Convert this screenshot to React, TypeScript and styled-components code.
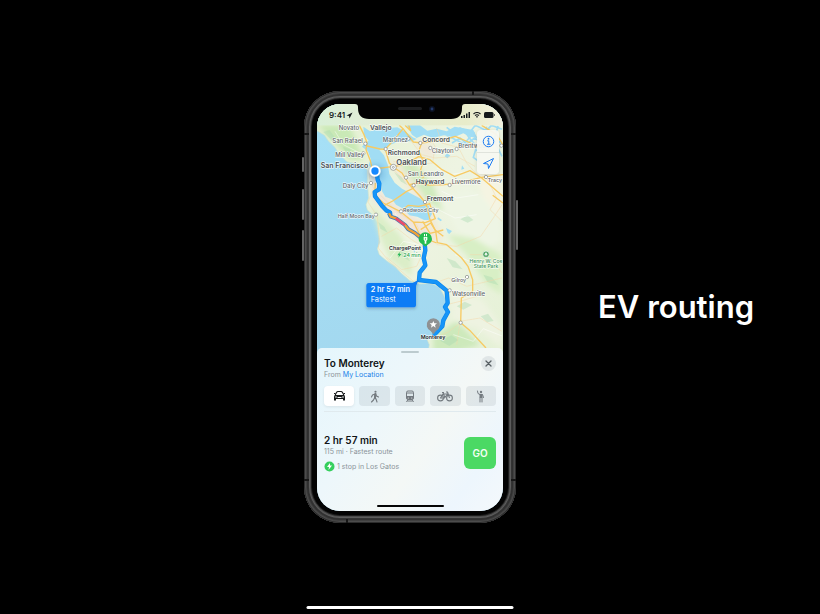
import React from "react";
import styled, { createGlobalStyle, css } from "styled-components";

const GlobalStyle = createGlobalStyle`
  * { box-sizing: border-box; }
  body {
    margin: 0;
    background: #000;
    font-family: Inter, "Liberation Sans", sans-serif;
  }
  button { font: inherit; border: 0; padding: 0; cursor: pointer; }
`;

const Stage = styled.main`
  position: relative;
  display: grid;
  grid-template-columns: 1fr auto 1fr;
  align-items: center;
  min-height: 100vh;
  overflow: hidden;
`;

const Headline = styled.h1`
  grid-column: 3;
  margin: 0;
  padding-left: 82px;
  color: #fff;
  font-size: 31px;
  line-height: 40px;
  font-weight: 600;
  white-space: nowrap;
`;

const SystemBar = styled.div`
  position: absolute;
  bottom: 5px;
  left: 50%;
  width: 207px;
  height: 3px;
  border-radius: 2px;
  background: #fff;
  transform: translateX(-50%);
`;

const Phone = styled.section`
  position: relative;
  grid-column: 2;
  width: 212px;
  padding: 13px 13px 12px;
  border-radius: 36px;
  background: #030303;
  box-shadow:
    inset 0 0 0 1px #2c2c2c,
    inset 0 0 0 2px #4c4c4c,
    inset 0 0 0 3px #404040,
    inset 0 0 0 4px #303030,
    inset 0 0 0 5px #343434,
    inset 0 0 0 6px #5c5c5c,
    inset 0 0 0 7px #4a4a4a,
    inset 0 0 0 8px #1c1c1c;
`;

const SideKey = styled.i<{ $side: "left" | "right"; $top: number; $size: number }>`
  position: absolute;
  ${(p) => p.$side}: -2px;
  top: ${(p) => p.$top}px;
  width: 2px;
  height: ${(p) => p.$size}px;
  border-radius: 1px;
  background: #636363;
`;

const Antenna = styled.i<{ $edge: "left" | "right" | "top" | "bottom"; $at: number }>`
  position: absolute;
  background: #161616;
  ${(p) => p.$edge}: 0;
  ${(p) =>
    p.$edge === "left" || p.$edge === "right"
      ? css`
          top: ${p.$at}px;
          width: 5px;
          height: 2px;
        `
      : css`
          left: ${p.$at}px;
          width: 2px;
          height: 4px;
        `}
`;

const Screen = styled.div`
  position: relative;
  display: flex;
  flex-direction: column;
  overflow: hidden;
  border-radius: 23px;
  background: #a5d9f0;
`;

const StatusBar = styled.header`
  position: absolute;
  inset: 0 0 auto;
  display: flex;
  justify-content: space-between;
  align-items: center;
  height: 21px;
  padding: 1px 8px 0 12px;
  color: #15191b;
  font-size: 8px;
  font-weight: 600;
`;

const Clock = styled.span`
  display: flex;
  align-items: center;
  gap: 1px;
`;

const Indicators = styled.span`
  display: flex;
  align-items: center;
  gap: 3px;
`;

const Notch = styled.svg`
  position: absolute;
  top: 0;
  left: 50%;
  width: 110px;
  height: 16px;
  transform: translateX(-50%);
`;

const MapArea = styled.div`
  position: relative;
`;

const MapArt = styled.svg`
  display: block;
  width: 100%;
  height: auto;
`;

const MapControls = styled.div`
  position: absolute;
  top: 26px;
  right: 4px;
  display: flex;
  flex-direction: column;
  width: 22px;
  border-radius: 4px;
  background: rgba(246, 248, 241, 0.94);
  box-shadow: 0 1px 4px rgba(0, 0, 0, 0.12);
`;

const MapControl = styled.button`
  display: grid;
  place-items: center;
  height: 22px;
  background: none;
  color: #1d7cf2;
  & + & { border-top: 1px solid #e0e3dc; }
`;

const Sheet = styled.section`
  position: relative;
  display: flex;
  flex-direction: column;
  margin-top: -6px;
  padding: 3px 7px 4px;
  border-radius: 5px 5px 0 0;
  background: linear-gradient(125deg, #e5f6fc 0%, #edf7fb 35%, #f4f8f6 60%, #edf6fd 82%, #f4f8fb 100%);
`;

const Grabber = styled.i`
  align-self: center;
  width: 18px;
  height: 2px;
  border-radius: 1px;
  background: #bccbcf;
`;

const SheetHead = styled.div`
  display: flex;
  justify-content: space-between;
  align-items: flex-start;
  padding-top: 3px;
`;

const Title = styled.h2`
  margin: 0;
  color: #101416;
  font-size: 10px;
  line-height: 14px;
  font-weight: 600;
  white-space: nowrap;
`;

const Detail = styled.p`
  display: flex;
  align-items: center;
  gap: 2px;
  margin: 0;
  color: #8b949a;
  font-size: 7px;
  line-height: 9px;
  white-space: nowrap;
`;

const OriginLink = styled.a`
  color: #2081e8;
  text-decoration: none;
`;

const CloseButton = styled.button`
  display: grid;
  place-items: center;
  width: 15px;
  height: 15px;
  border-radius: 50%;
  background: #e0e6e7;
  color: #565e62;
`;

const Modes = styled.div`
  display: grid;
  grid-template-columns: repeat(5, 1fr);
  gap: 5px;
  margin-top: 7px;
  padding-bottom: 5px;
  border-bottom: 1px solid #e0eaee;
`;

const Mode = styled.button<{ $active?: boolean }>`
  display: grid;
  place-items: center;
  height: 20px;
  border-radius: 4px;
  background: ${(p) => (p.$active ? "#fff" : "rgba(110, 130, 140, 0.14)")};
  color: ${(p) => (p.$active ? "#17191a" : "#747b80")};
  box-shadow: ${(p) => (p.$active ? "0 1px 3px rgba(0, 0, 0, 0.08)" : "none")};
`;

const RouteRow = styled.div`
  display: flex;
  justify-content: space-between;
  align-items: flex-start;
  padding: 21px 0 33px;
`;

const RouteInfo = styled.div`
  display: flex;
  flex-direction: column;
  ${Detail} + ${Detail} { margin-top: 5px; }
`;

const GoButton = styled.button`
  width: 32px;
  height: 32px;
  margin-top: 4px;
  border-radius: 6px;
  background: #4bd964;
  color: #f3fff4;
  font-size: 10px;
  font-weight: 600;
`;

const HomeBar = styled.i`
  align-self: center;
  width: 67px;
  height: 2px;
  border-radius: 1px;
  background: #050505;
`;

type LabelProps = { x: number; y: number; size?: number; anchor?: "start" | "end" | "middle"; children: string };

const Place = styled.text<{ $size: number; $tone: string; $weight: number }>`
  font-size: ${(p) => p.$size}px;
  font-weight: ${(p) => p.$weight};
  fill: ${(p) => p.$tone};
  stroke: rgba(255, 255, 255, 0.75);
  stroke-width: 4px;
  stroke-linejoin: round;
  paint-order: stroke;
`;

function Town({ x, y, size = 18, anchor = "start", children }: LabelProps) {
  return (
    <Place x={x} y={y} textAnchor={anchor} $size={size} $tone={size > 18 ? "#4c5256" : "#5f676b"} $weight={size > 18 ? 600 : 500}>
      {children}
    </Place>
  );
}

const townDots = [
  [196, 167], [190, 196], [325, 152], [257, 183], [361, 165], [391, 180], [470, 183],
  [318, 269], [341, 292], [449, 291], [375, 342], [303, 370], [228, 380], [213, 285],
  [501, 567], [449, 607], [482, 704], [558, 267], [604, 173],
];

const northRoute =
  "M230 250 L233 275 L238 287 L237 304 L224 312 L225 325 L247 355 L260 368 L270 373 L271 381";
const slowRoute = "M267 376 L272 386 L288 391 L315 411 L325 424 L345 435 L362 449 L374 456";
const southRoute =
  "M373 455 L376 487 L371 510 L376 532 L359 554 L357 576 L408 582 L440 608 L443 645 L435 657 L444 672 L430 697 L427 715 L404 739";

function MapDrawing() {
  return (
    <MapArt viewBox="51 48 558 750" role="img" aria-label="Map of the route from San Francisco to Monterey">
      <defs>
        <linearGradient id="ocean" x1="0" y1="0" x2="0.3" y2="1">
          <stop offset="0" stopColor="#a6e1f7" />
          <stop offset="1" stopColor="#a3d8ef" />
        </linearGradient>
        <linearGradient id="land" x1="0" y1="0" x2="1" y2="1">
          <stop offset="0" stopColor="#e2f0d0" />
          <stop offset="0.5" stopColor="#eef4e2" />
          <stop offset="1" stopColor="#e5f1d6" />
        </linearGradient>
        <linearGradient id="haze" x1="0" y1="0" x2="1" y2="0">
          <stop offset="0" stopColor="#d9f0d8" />
          <stop offset="0.3" stopColor="#e2edd6" />
          <stop offset="0.8" stopColor="#e8ecca" />
          <stop offset="1" stopColor="#f2f0de" />
        </linearGradient>
        <filter id="soft" x="-30%" y="-30%" width="160%" height="160%">
          <feGaussianBlur stdDeviation="8" />
        </filter>
        <filter id="shade" x="-30%" y="-30%" width="160%" height="170%">
          <feDropShadow dx="0" dy="4" stdDeviation="5" floodColor="#234" floodOpacity="0.3" />
        </filter>
      </defs>
      <rect x="51" y="48" width="558" height="750" fill="url(#ocean)" />
      <path
        d="M51 48 H609 V798 H384 L388 770 L382 756 L398 744 L416 738 L432 712 L444 672 L436 630 L418 598 L394 586 L358 588 L330 578 L304 556 L285 535 L262 520 L238 500 L232 482 L240 462 L235 430 L232 402 L220 382 L202 366 L198 350 L206 330 L203 290 L202 246 L188 232 L165 226 L142 222 L126 206 L112 208 L106 196 L116 196 L105 178 L86 160 L74 142 L51 128 Z"
        fill="url(#land)"
        stroke="#d0e6cf"
        strokeWidth="2"
      />
      <g filter="url(#soft)">
        <path d="M55 112 L150 112 L190 215 L150 215 L100 160 Z" fill="#c9e9b6" />
        <path d="M212 350 L250 390 L300 440 L335 500 L335 565 L270 515 L242 450 Z" fill="#dbeec8" />
        <path d="M275 235 L310 270 L350 320 L430 370 L400 290 L340 220 Z" fill="#d0ebbe" />
        <path d="M420 330 L470 430 L560 480 L605 460 L600 340 L500 300 Z" fill="#eef5e4" />
        <path d="M440 440 L500 500 L560 590 L604 620 L604 500 L520 450 Z" fill="#d8efc5" />
        <path d="M450 590 L550 640 L606 720 L606 780 L530 720 L460 700 Z" fill="#eef3e1" />
        <path d="M400 745 L470 700 L540 770 L470 792 L400 792 Z" fill="#cde9bb" />
        <path d="M520 245 L606 260 V400 L550 330 Z" fill="#f5f4e2" />
        <path d="M206 245 L226 240 L240 310 L300 360 L370 405 L410 460 L380 470 L300 410 L220 340 Z" fill="#f0e5da" />
        <path d="M252 205 L300 230 L350 290 L388 350 L430 450 L400 470 L380 400 L330 310 Z" fill="#f1ead7" />
        <path d="M340 155 L400 170 L400 210 L365 200 Z" fill="#f1e9d8" />
      </g>
      <g fill="#a9dab0" opacity="0.4">
        <path d="M70 132 l18 -6 l14 18 l12 24 l-18 -10 Z" />
        <path d="M128 176 l22 8 l18 28 l-24 -8 Z" />
        <path d="M282 252 l22 14 l18 26 l-20 -12 Z" />
        <path d="M235 402 l18 14 l10 18 l-22 -12 Z" />
        <path d="M296 480 l20 14 l14 26 l-24 -14 Z" />
        <path d="M481 394 l22 -12 l17 14 l-17 8 Z" />
        <path d="M440 510 l26 10 l22 24 l-30 -6 Z" />
        <path d="M470 655 l24 -14 l22 10 l-26 14 Z" />
        <path d="M542 685 l22 -8 l17 22 l-20 4 Z" />
        <path d="M420 758 l34 -16 l22 14 l-28 18 Z" />
        <path d="M550 560 l26 8 l20 24 l-34 -10 Z" />
      </g>
      <g fill="#a1ddf4">
        <path d="M190 116 L210 130 L240 122 L292 118 L318 132 L338 148 L350 153 L336 160 L300 160 L276 168 L258 178 L238 186 L252 202 L264 232 L268 258 L284 284 L306 302 L330 315 L362 332 L387 354 L396 378 L386 396 L372 396 L352 386 L328 382 L310 362 L288 350 L276 334 L256 326 L246 310 L243 285 L236 260 L218 244 L206 232 L212 212 L204 190 L186 176 L194 166 L206 158 L192 142 Z" />
        <path d="M320 112 L360 112 L382 128 L410 122 L440 130 L464 116 L520 126 L532 150 L510 146 L490 136 L462 148 L432 142 L398 150 L372 140 L350 150 L336 140 Z" />
        <path d="M441 196 l10 7 l-9 8 l-8 -6 Z M486 232 l7 10 l-9 3 Z M438 420 l18 9 l-8 9 l-5 -4 Z" />
        <path d="M414 388 l12 8 l-4 4 l-10 -7 Z M340 480 l6 12 l-4 2 Z" />
      </g>
      <g fill="none" stroke="#a1ddf4" strokeWidth="5">
        <path d="M440 118 L468 140 L480 120 L510 132 L526 112 L560 128 L574 112 L606 124" />
        <path d="M456 165 L480 150 L500 168 L524 150 L550 168 L580 150 L604 165" />
        <path d="M492 126 L508 150 L530 175 L520 208 L542 224 M560 116 L552 160 L530 190" />
        <path d="M440 142 L492 168 L523 132 M594 114 L582 156 L606 205" />
      </g>
      <g fill="none" stroke="#f5d6a8" strokeWidth="2" opacity="0.7">
        <path d="M211 245 L208 270 L221 300 L204 342 L232 385 L238 450 L235 480 L265 518 L350 588 M242 322 L290 370 L350 410 L366 445" />
        <path d="M268 232 L300 265 L350 315 L398 375 M280 220 L322 230 L370 272 L420 293 L470 285" />
        <path d="M330 155 L365 200 L405 210 L470 205 L525 235 M390 150 L405 175 L398 225 L345 230" />
        <path d="M410 470 L470 475 L542 445 L580 390 L606 350 M510 500 L565 500 L606 555" />
        <path d="M390 590 L446 570 L500 595 L606 570 M440 650 L480 640 L530 625 M480 700 L540 690 L606 730" />
        <path d="M245 445 L290 420 L335 455 L375 480 L350 535 L305 545 L260 508 M410 748 L445 732 L480 705 L470 770" />
        <path d="M410 120 L425 165 L475 178 L500 225 L540 270 M548 245 L590 330 L570 365 L606 400" />
      </g>
      <g fill="none" stroke="#fff" strokeWidth="2" opacity="0.7">
        <path d="M270 510 L310 460 L360 470 M285 375 L310 420 M405 360 L465 390 L530 380 M460 740 L520 760 L550 722 L606 744 M465 500 L530 530 L606 520" />
        <path d="M105 130 L130 170 L180 195 M410 240 L450 260 L510 250 M425 310 L470 330 L535 320" />
      </g>
      <g fill="none" stroke="#f7ca63" strokeWidth="4" strokeLinejoin="round">
        <path d="M178 112 L192 140 L201 164 L198 185 L211 218 L216 240 L245 240 L276 236" />
        <path d="M201 174 L240 183 L256 184 L268 225 L280 237 L306 255 L328 290 L360 324 L377 345 L390 395 L407 429 L412 464 L440 470 L485 510 L504 535 L518 575 L518 610 L484 630 L482 704 L512 730 L558 780" />
        <path d="M256 184 L290 146 L309 122 L298 112 M309 122 L340 162 L365 165 L356 190 L370 220 L362 245 L370 270 M365 165 L430 156 L466 145 L505 162 L550 185" />
        <path d="M280 237 L320 226 L356 206 L390 215 L426 245 L464 265 L510 248 L545 270 L609 325 M328 290 L355 285 L384 291 L430 290 L470 286 L545 268 L609 260" />
        <path d="M248 355 L278 339 L303 322 L320 310 L342 300 M303 370 L325 352 L356 355 L387 348" />
        <path d="M226 285 L224 320 L250 345 L300 370 L340 402 L376 404 L406 392 L388 345 M340 402 L362 446 L410 465" />
        <path d="M368 400 L390 436 L430 426 M362 425 L392 405 L406 427 L430 445 M390 436 L375 460" />
        <path d="M545 112 L590 140 L609 170 M578 322 L609 345 M315 112 L332 128 L326 112" />
      </g>
      <rect x="51" y="48" width="558" height="64" fill="url(#haze)" />
      <circle cx="228" cy="257" r="31" fill="#3185ca" opacity="0.2" filter="url(#soft)" />
      <path d={northRoute} fill="none" stroke="#0a86ee" strokeWidth="13" strokeLinecap="round" strokeLinejoin="round" />
      <path d={northRoute} fill="none" stroke="#1695f8" strokeWidth="9" strokeLinecap="round" strokeLinejoin="round" />
      <path d={slowRoute} fill="none" stroke="#347bbb" strokeWidth="12" strokeLinejoin="round" />
      <path d={slowRoute} fill="none" stroke="#f1a136" strokeWidth="7" strokeLinejoin="round" />
      <path d="M287 391 L315 411" fill="none" stroke="#e94b70" strokeWidth="8" />
      <path d={southRoute} fill="none" stroke="#0a86ee" strokeWidth="13" strokeLinecap="round" strokeLinejoin="round" />
      <path d={southRoute} fill="none" stroke="#1695f8" strokeWidth="9" strokeLinecap="round" strokeLinejoin="round" />
      <g fill="#fff" stroke="#7d8383" strokeWidth="2">
        {townDots.map(([cx, cy]) => (
          <circle key={`${cx}-${cy}`} cx={cx} cy={cy} r="5" />
        ))}
        <circle cx="280" cy="238" r="9" />
        <circle cx="280" cy="238" r="3" />
      </g>
      <Town x={116} y={126}>Novato</Town>
      <Town x={210} y={127} size={20}>Vallejo</Town>
      <Town x={97} y={164}>San Rafael</Town>
      <Town x={248} y={162}>Martinez</Town>
      <Town x={367} y={161} size={20}>Concord</Town>
      <Town x={395} y={195}>Clayton</Town>
      <Town x={475} y={180}>Brentwood</Town>
      <Town x={263} y={200} size={20}>Richmond</Town>
      <Town x={106} y={207}>Mill Valley</Town>
      <Town x={289} y={230} size={23}>Oakland</Town>
      <Town x={62} y={241} size={21}>San Francisco</Town>
      <Town x={323} y={265}>San Leandro</Town>
      <Town x={347} y={289} size={20}>Hayward</Town>
      <Town x={455} y={289}>Livermore</Town>
      <Town x={606} y={281} size={16} anchor="end">Tracy</Town>
      <Town x={128} y={299}>Daly City</Town>
      <Town x={380} y={338} size={20}>Fremont</Town>
      <Town x={309} y={371} size={16}>Redwood City</Town>
      <Town x={113} y={390} size={16}>Half Moon Bay</Town>
      <Town x={454} y={582} size={16}>Gilroy</Town>
      <Town x={456} y={623}>Watsonville</Town>
      <Place x={363} y={486} textAnchor="end" $size={16} $tone="#252b2d" $weight={600}>ChargePoint</Place>
      <Place x={362} y={506} textAnchor="end" $size={16} $tone="#2fa857" $weight={500}>24 min</Place>
      <path d="M299 492 L292 502 H297 L295 509 L304 498 H299 Z" fill="#28b85a" />
      <Place x={558} y={524} textAnchor="middle" $size={15} $tone="#43945b" $weight={500}>Henry W. Coe</Place>
      <Place x={558} y={539} textAnchor="middle" $size={15} $tone="#43945b" $weight={500}>State Park</Place>
      <circle cx="558" cy="499" r="10" fill="#58a96a" stroke="#fff" strokeWidth="2" />
      <path d="M558 493 L563 500 H559 V505 H557 V500 H553 Z" fill="#fff" />
      <Place x={399} y={754} textAnchor="middle" $size={16} $tone="#252b2d" $weight={600}>Monterey</Place>
      <path d="M404 739 L420 720" fill="none" stroke="#1695f8" strokeWidth="9" strokeLinecap="round" />

      <circle cx="225" cy="249" r="17" fill="#fff" filter="url(#shade)" />
      <circle cx="225" cy="249" r="11" fill="#1588ff" />
      <path d="M376 476 L366 468 Q356 462 356 453 A20 20 0 1 1 396 453 Q396 462 386 468 Z" fill="#25bd50" />
      <path d="M371 447 H382 V455 L379 459 V467 H374 V459 L371 455 Z M372 438 H375 V445 H372 Z M378 438 H381 V445 H378 Z" fill="#fff" />
      <path d="M377 448 L374 454 H376 L375 458 L379 452 H377 Z" fill="#25bd50" />
      <path d="M400 739 L392 729 A20 20 0 1 1 408 729 Z" fill="#8f9193" />
      <path d="M400 699 L403 706 L411 706 L405 711 L407 719 L400 714 L393 719 L395 711 L389 706 L397 706 Z" fill="#fff" />
      <g filter="url(#shade)">
        <path d="M207 585 H338 L356 575 L348 594 V650 Q348 658 340 658 H207 Q199 658 199 650 V593 Q199 585 207 585 Z" fill="#087bf5" />
      </g>
      <g fill="#f7fcff">
        <text x="212" y="612" fontSize="22" fontWeight="600">2 hr 57 min</text>
        <text x="212" y="641" fontSize="22">Fastest</text>
      </g>
    </MapArt>
  );
}

function NotchShape() {
  return (
    <Notch viewBox="0 0 110 16" aria-hidden="true">
      <path d="M0 0 Q3 0 3 3 V4 Q3 15 14 15 H96 Q107 15 107 4 V3 Q107 0 110 0 Z" fill="#030303" />
      <rect x="43" y="3" width="24" height="3" rx="1.5" fill="#1c1d1f" />
      <circle cx="77" cy="5" r="3" fill="#0c1222" />
      <circle cx="77" cy="5" r="1.4" fill="#233a6b" />
    </Notch>
  );
}

function CarIcon() {
  return (
    <svg width="13" height="12" viewBox="0 0 26 24" fill="none" stroke="currentColor" aria-hidden="true">
      <path d="M4 11 L7 5 Q8 3 10 3 H16 Q18 3 19 5 L22 11" strokeWidth="2.2" />
      <path d="M2 7 H5 M21 7 H24" strokeWidth="2" />
      <path d="M4 10 H22 Q24 11 24 14 V21 H20 V18 H6 V21 H2 V14 Q2 11 4 10 Z" fill="currentColor" stroke="none" />
      <path d="M9 15 H17" stroke="#fff" strokeWidth="2" />
      <circle cx="6" cy="14" r="1.6" fill="#fff" stroke="none" />
      <circle cx="20" cy="14" r="1.6" fill="#fff" stroke="none" />
    </svg>
  );
}

function WalkIcon() {
  return (
    <svg width="10" height="13" viewBox="0 0 20 26" fill="none" stroke="currentColor" strokeWidth="2.2" strokeLinecap="round" strokeLinejoin="round" aria-hidden="true">
      <circle cx="11" cy="3.5" r="2.2" fill="currentColor" stroke="none" />
      <path d="M10 8 L5 10 L3 14 M11 8 L13 12 L17 14 M10 8 L9 15 L12 18 L14 24 M9 16 L7 20 L3 24" />
      <path d="M11 8 L10 15" strokeWidth="4" />
    </svg>
  );
}

function TrainIcon() {
  return (
    <svg width="10" height="13" viewBox="0 0 20 26" fill="none" stroke="currentColor" strokeWidth="2" aria-hidden="true">
      <rect x="3" y="2" width="14" height="17" rx="3" />
      <path d="M3 6 H17 M3 13 H17 M6 19 L3 24 M14 19 L17 24 M5 22 H15" />
      <path d="M4 13 H16 V18 H4 Z" fill="currentColor" stroke="none" />
      <circle cx="6.5" cy="15.8" r="1" fill="#fff" stroke="none" />
      <circle cx="13.5" cy="15.8" r="1" fill="#fff" stroke="none" />
    </svg>
  );
}

function BikeIcon() {
  return (
    <svg width="16" height="11" viewBox="0 0 32 22" fill="none" stroke="currentColor" strokeWidth="2.2" strokeLinejoin="round" aria-hidden="true">
      <circle cx="7" cy="14" r="5.8" />
      <circle cx="25" cy="14" r="5.8" />
      <path d="M7 14 L12 6 H21 L15 14 Z M10 3 H14 M12 3 L16 14 M18 2 H21 L25 14" />
    </svg>
  );
}

function HailIcon() {
  return (
    <svg width="9" height="13" viewBox="0 0 18 26" fill="none" stroke="currentColor" strokeWidth="2" strokeLinecap="round" strokeLinejoin="round" aria-hidden="true">
      <circle cx="10" cy="4" r="2.4" fill="currentColor" stroke="none" />
      <path d="M3 2 L4 7 L8 9 H13 L15 15 M8 16 V24 M12 16 V24" />
      <path d="M7 8 H13 V16 H7 Z" fill="currentColor" stroke="none" />
    </svg>
  );
}

export default function App() {
  return (
    <>
      <GlobalStyle />
      <Stage>
        <Phone>
          <SideKey $side="left" $top={66} $size={15} />
          <SideKey $side="left" $top={98} $size={31} />
          <SideKey $side="left" $top={139} $size={31} />
          <SideKey $side="right" $top={109} $size={50} />
          <Antenna $edge="left" $at={42} />
          <Antenna $edge="right" $at={42} />
          <Antenna $edge="left" $at={388} />
          <Antenna $edge="right" $at={388} />
          <Antenna $edge="top" $at={168} />
          <Antenna $edge="bottom" $at={42} />
          <Screen>
            <MapArea>
              <MapDrawing />
              <MapControls>
                <MapControl aria-label="Map information">
                  <svg width="13" height="13" viewBox="0 0 26 26" fill="none" stroke="currentColor" strokeWidth="2" aria-hidden="true">
                    <circle cx="13" cy="13" r="10.5" />
                    <path d="M10.5 11.5 H13.5 V18.5 M10 18.5 H17" />
                    <circle cx="13" cy="7.5" r="1.8" fill="currentColor" stroke="none" />
                  </svg>
                </MapControl>
                <MapControl aria-label="Show my location">
                  <svg width="13" height="13" viewBox="0 0 26 26" fill="none" stroke="currentColor" strokeWidth="2" strokeLinejoin="round" aria-hidden="true">
                    <path d="M23 3 L3 13 L12 14 L13 23 Z" />
                  </svg>
                </MapControl>
              </MapControls>
            </MapArea>
            <Sheet>
              <Grabber />
              <SheetHead>
                <div>
                  <Title>To Monterey</Title>
                  <Detail>
                    From <OriginLink href="#location">My Location</OriginLink>
                  </Detail>
                </div>
                <CloseButton aria-label="Close">
                  <svg width="7" height="7" viewBox="0 0 14 14" stroke="currentColor" strokeWidth="2.6" strokeLinecap="round" aria-hidden="true">
                    <path d="M2 2 L12 12 M12 2 L2 12" />
                  </svg>
                </CloseButton>
              </SheetHead>
              <Modes>
                <Mode $active aria-label="Drive" aria-pressed="true"><CarIcon /></Mode>
                <Mode aria-label="Walk"><WalkIcon /></Mode>
                <Mode aria-label="Transit"><TrainIcon /></Mode>
                <Mode aria-label="Cycle"><BikeIcon /></Mode>
                <Mode aria-label="Ride share"><HailIcon /></Mode>
              </Modes>
              <RouteRow>
                <RouteInfo>
                  <Title>2 hr 57 min</Title>
                  <Detail>115 mi · Fastest route</Detail>
                  <Detail>
                    <svg width="11" height="11" viewBox="0 0 22 22" aria-hidden="true">
                      <circle cx="11" cy="11" r="10" fill="#35cf5d" />
                      <path d="M12 4 L6 12 H10 L9 18 L16 9 H12 Z" fill="#fff" />
                    </svg>
                    1 stop in Los Gatos
                  </Detail>
                </RouteInfo>
                <GoButton>GO</GoButton>
              </RouteRow>
              <HomeBar />
            </Sheet>
            <StatusBar>
              <Clock>
                9:41
                <svg width="7" height="7" viewBox="0 0 14 14" aria-hidden="true">
                  <path d="M13 1 L1 7 L6 8 L7 13 Z" fill="currentColor" />
                </svg>
              </Clock>
              <Indicators>
                <svg width="9" height="6" viewBox="0 0 18 12" fill="currentColor" aria-hidden="true">
                  <path d="M0 8 H3 V12 H0 Z M5 6 H8 V12 H5 Z M10 3 H13 V12 H10 Z M15 0 H18 V12 H15 Z" />
                </svg>
                <svg width="8" height="6" viewBox="0 0 16 12" fill="none" stroke="currentColor" strokeWidth="2.2" aria-hidden="true">
                  <path d="M1 4 Q8 -2 15 4 M4 7 Q8 4 12 7" />
                  <path d="M6 9 Q8 7 10 9 L8 12 Z" fill="currentColor" stroke="none" />
                </svg>
                <svg width="11" height="6" viewBox="0 0 22 12" aria-hidden="true">
                  <rect x="0" y="0" width="19" height="12" rx="3" fill="currentColor" />
                  <path d="M20 4 V8 Q22 7 22 6 Q22 5 20 4" fill="currentColor" />
                </svg>
              </Indicators>
            </StatusBar>
            <NotchShape />
          </Screen>
        </Phone>
        <Headline>EV routing</Headline>
        <SystemBar />
      </Stage>
    </>
  );
}
